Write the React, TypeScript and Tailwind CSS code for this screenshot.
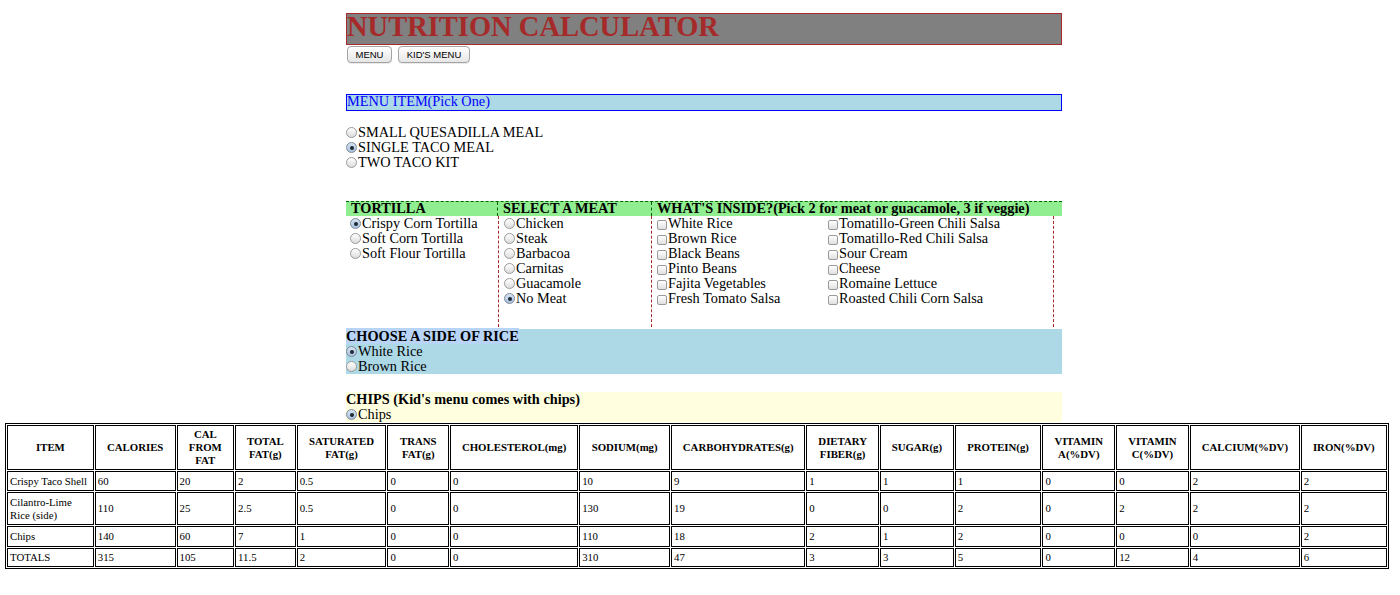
import React from "react";

type Row = { item: React.ReactNode; values: string[] };

const headers: { label: React.ReactNode; w: string }[] = [
  { label: "ITEM", w: "w-[86px]" },
  { label: "CALORIES", w: "w-[80px]" },
  { label: <>CAL<br />FROM<br />FAT</>, w: "w-[57px]" },
  { label: <>TOTAL<br />FAT(g)</>, w: "w-[60px]" },
  { label: <>SATURATED<br />FAT(g)</>, w: "w-[89px]" },
  { label: <>TRANS<br />FAT(g)</>, w: "w-[61px]" },
  { label: "CHOLESTEROL(mg)", w: "w-[127px]" },
  { label: "SODIUM(mg)", w: "w-[90px]" },
  { label: "CARBOHYDRATES(g)", w: "w-[133px]" },
  { label: <>DIETARY<br />FIBER(g)</>, w: "w-[72px]" },
  { label: "SUGAR(g)", w: "w-[73px]" },
  { label: "PROTEIN(g)", w: "w-[86px]" },
  { label: <>VITAMIN<br />A(%DV)</>, w: "w-[72px]" },
  { label: <>VITAMIN<br />C(%DV)</>, w: "w-[72px]" },
  { label: "CALCIUM(%DV)", w: "w-[109px]" },
  { label: "IRON(%DV)", w: "w-[85px]" },
];

const rows: (Row & { h: string })[] = [
  { item: "Crispy Taco Shell", values: ["60", "20", "2", "0.5", "0", "0", "10", "9", "1", "1", "1", "0", "0", "2", "2"], h: "h-[20px]" },
  { item: <>Cilantro-Lime<br />Rice (side)</>, values: ["110", "25", "2.5", "0.5", "0", "0", "130", "19", "0", "0", "2", "0", "2", "2", "2"], h: "h-[33px]" },
  { item: "Chips", values: ["140", "60", "7", "1", "0", "0", "110", "18", "2", "1", "2", "0", "0", "0", "2"], h: "h-[20.5px]" },
  { item: "TOTALS", values: ["315", "105", "11.5", "2", "0", "0", "310", "47", "3", "3", "5", "0", "12", "4", "6"], h: "h-[19.5px]" },
];

function Radio({ checked }: { checked?: boolean }) {
  return (
    <span
      className={
        checked
          ? "inline-flex h-[11px] w-[11px] shrink-0 items-center justify-center rounded-full border border-[#7f8a96] bg-linear-to-b from-[#d6e4f3] to-[#a9c2e0]"
          : "inline-flex h-[11px] w-[11px] shrink-0 items-center justify-center rounded-full border border-[#9a9a9a] bg-linear-to-b from-white to-[#dcdcdc]"
      }
    >
      {checked && <span className="h-[4px] w-[4px] rounded-full bg-[#1d2733]" />}
    </span>
  );
}

function Check() {
  return (
    <span className="inline-block h-[10px] w-[10px] shrink-0 translate-y-[1px] rounded-[2px] border border-[#9a9a9a] bg-linear-to-b from-white to-[#e0e0e0]" />
  );
}

function RadioLine({ label, checked }: { label: string; checked?: boolean }) {
  return (
    <div className="flex h-[15px] items-center whitespace-nowrap">
      <Radio checked={checked} />
      <span className="ml-[1px]">{label}</span>
    </div>
  );
}

function CheckLine({ label }: { label: string }) {
  return (
    <div className="flex h-[15px] items-center whitespace-nowrap">
      <Check />
      <span className="ml-[1px]">{label}</span>
    </div>
  );
}

function Button({ children, w }: { children: React.ReactNode; w: string }) {
  return (
    <button
      className={`${w} flex h-[17px] items-center justify-center rounded-[4px] border border-[#a3a3a3] bg-linear-to-b from-white to-[#e6e6e6] font-['Liberation_Sans',sans-serif] text-[9.5px] leading-none text-black shadow-[0_1px_0_rgba(0,0,0,0.08)]`}
    >
      {children}
    </button>
  );
}

export default function App() {
  return (
    <div className="min-h-[595px] bg-white font-['Liberation_Serif',serif] text-[14.3px] leading-[15px] text-black">
      <div className="ml-[346px] w-[716px] pt-[13px]">
        <h1 className="h-[32px] border border-[#a52a2a] bg-[#808080] text-[28.5px] font-bold leading-[25px] text-[#a52a2a]">
          NUTRITION CALCULATOR
        </h1>

        <div className="mt-[1px] flex gap-[6px] pl-[1px]">
          <Button w="w-[45px]">MENU</Button>
          <Button w="w-[72px]">KID'S MENU</Button>
        </div>

        {/* menu item */}
        <div className="mt-[31px] h-[17px] border border-[#0000ff] bg-[#add8e6] leading-[12px] text-[#0000ff]">
          MENU ITEM(Pick One)
        </div>

        <div className="mt-[14px]">
          <RadioLine label="SMALL QUESADILLA MEAL" />
          <RadioLine label="SINGLE TACO MEAL" checked />
          <RadioLine label="TWO TACO KIT" />
        </div>

        {/* build your meal */}
        <div className="mt-[31px] flex h-[15px] border-t border-dashed border-[#006400] bg-[#90ee90] font-bold leading-[13px]">
          <div className="w-[152px] border-r border-dashed border-[#006400] pl-[5px]">TORTILLA</div>
          <div className="w-[154px] border-r border-dashed border-[#006400] pl-[5px]">SELECT A MEAT</div>
          <div className="flex-1 whitespace-nowrap pl-[5px]">WHAT'S INSIDE?(Pick 2 for meat or guacamole, 3 if veggie)</div>
        </div>

        <div className="flex h-[111px]">
          <div className="w-[153px] border-r border-dashed border-[#a52a2a] pl-[4px]">
            <RadioLine label="Crispy Corn Tortilla" checked />
            <RadioLine label="Soft Corn Tortilla" />
            <RadioLine label="Soft Flour Tortilla" />
          </div>
          <div className="w-[153px] border-r border-dashed border-[#a52a2a] pl-[5px]">
            <RadioLine label="Chicken" />
            <RadioLine label="Steak" />
            <RadioLine label="Barbacoa" />
            <RadioLine label="Carnitas" />
            <RadioLine label="Guacamole" />
            <RadioLine label="No Meat" checked />
          </div>
          <div className="grid w-[402px] grid-cols-[171px_1fr] content-start border-r border-dashed border-[#a52a2a] pl-[5px]">
            <div>
              <CheckLine label="White Rice" />
              <CheckLine label="Brown Rice" />
              <CheckLine label="Black Beans" />
              <CheckLine label="Pinto Beans" />
              <CheckLine label="Fajita Vegetables" />
              <CheckLine label="Fresh Tomato Salsa" />
            </div>
            <div>
              <CheckLine label="Tomatillo-Green Chili Salsa" />
              <CheckLine label="Tomatillo-Red Chili Salsa" />
              <CheckLine label="Sour Cream" />
              <CheckLine label="Cheese" />
              <CheckLine label="Romaine Lettuce" />
              <CheckLine label="Roasted Chili Corn Salsa" />
            </div>
          </div>
        </div>

        {/* rice */}
        <div className="mt-[2px] bg-[#add8e6]">
          <div className="h-[15px]">
            <span className="bg-[#b8d4f6] font-bold">CHOOSE A SIDE OF RICE</span>
          </div>
          <RadioLine label="White Rice" checked />
          <RadioLine label="Brown Rice" />
        </div>

        {/* chips */}
        <div className="mt-[18px] bg-[#ffffe0]">
          <div className="h-[15px] font-bold">CHIPS (Kid's menu comes with chips)</div>
          <RadioLine label="Chips" checked />
        </div>
      </div>

      <table className="ml-[5px] mt-[1px] w-[1383.75px] table-fixed border-separate border-spacing-[1.75px] border border-black text-[10.8px] leading-[13px]">
        <thead>
          <tr className="h-[45px]">
            {headers.map((h, i) => (
              <th key={i} className={`${h.w} border border-black px-[2px] text-center align-middle font-bold`}>
                {h.label}
              </th>
            ))}
          </tr>
        </thead>
        <tbody>
          {rows.map((r, i) => (
            <tr key={i} className={r.h}>
              <td className="border border-black px-[2px] py-[1px] text-left align-middle">{r.item}</td>
              {r.values.map((v, j) => (
                <td key={j} className="border border-black px-[2px] py-[1px] text-left align-middle">
                  {v}
                </td>
              ))}
            </tr>
          ))}
        </tbody>
      </table>
    </div>
  );
}
